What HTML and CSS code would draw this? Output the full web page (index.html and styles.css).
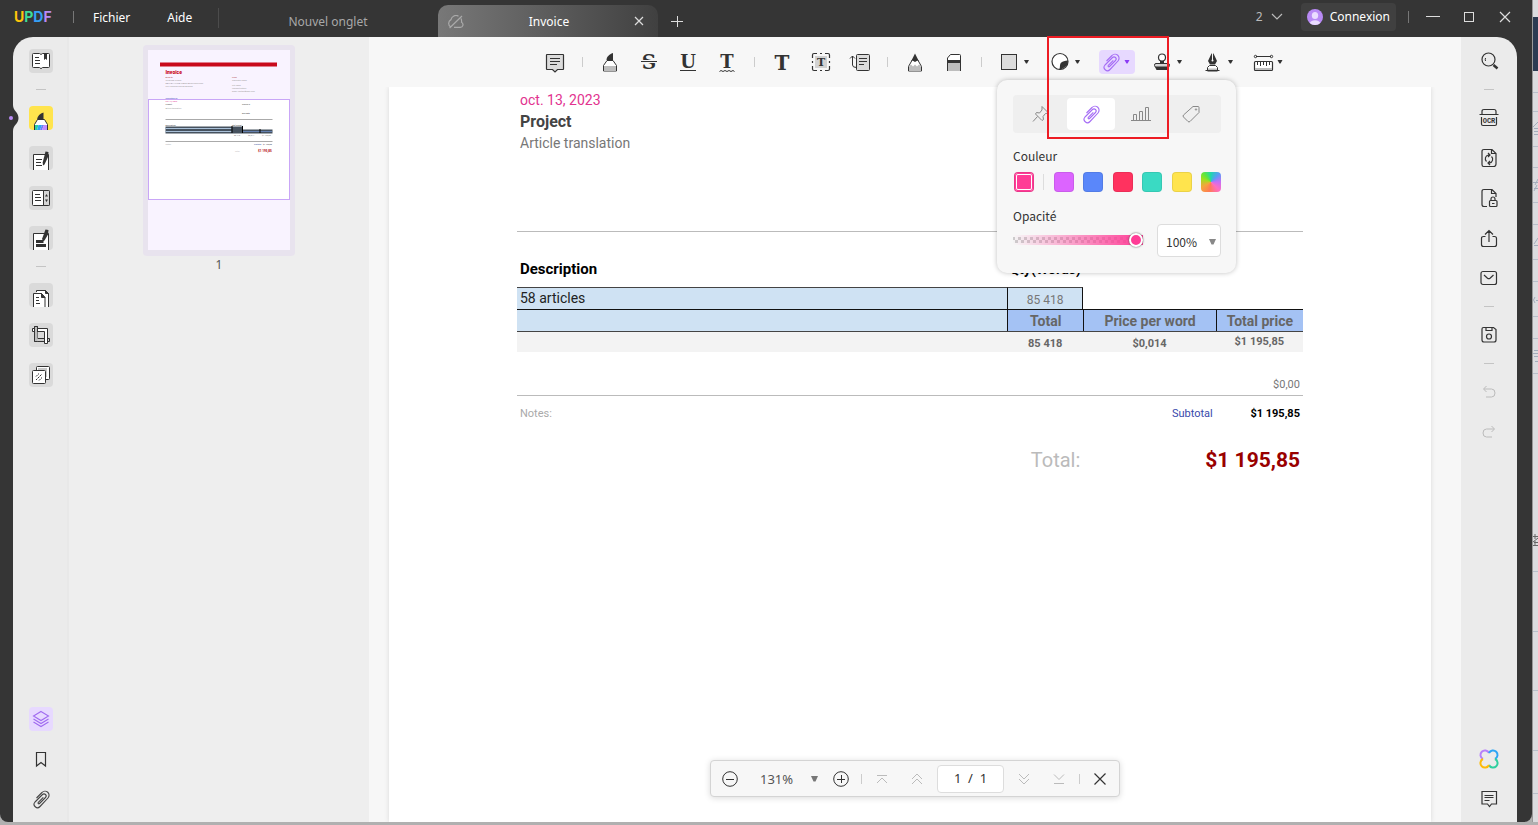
FILE: index.html
```html
<!DOCTYPE html>
<html lang="fr">
<head>
<meta charset="utf-8">
<title>UPDF - Invoice</title>
<link rel="stylesheet" href="styles.css">
</head>
<body>
<div class="desktop">
<div class="window">
  <header class="titlebar">
    <div class="logo"><span class="logo-u">U</span><span class="logo-p">P</span><span class="logo-d">D</span><span class="logo-f">F</span></div>
    <nav class="menu">
      <button type="button">Fichier</button>
      <button type="button">Aide</button>
    </nav>
    <div class="tabs">
      <button type="button" class="tab">Nouvel onglet</button>
      <div class="tab tab-active">
        <svg class="tab-cloud" width="16" height="14" viewBox="0 0 16 14" fill="none" stroke="#aaa" stroke-width="1.2"><path d="M10.5 1.2A5 5 0 0 0 3 4.600 4.200 4.200 0 0 0 2.800 12M1.600 13 14 1M6 12.400h6.200a2.700 2.700 0 0 0 1.300-5.100A6 6 0 0 0 13 3.600"/></svg>
        <span>Invoice</span>
        <button type="button" class="tab-close" aria-label="Fermer l'onglet"><svg width="10" height="10" viewBox="0 0 10 10" stroke="#ddd" stroke-width="1.2"><path d="M1 1l8 8M9 1l-8 8"/></svg></button>
      </div>
      <button type="button" class="tab-new" aria-label="Ajouter un onglet"><svg width="12" height="12" viewBox="0 0 12 12" stroke="#ddd"><path d="M0 6.5h12M6.5 1v11"/></svg></button>
    </div>
    <div class="account">
      <button type="button" class="count">2 <svg width="12" height="8" viewBox="0 0 12 8" fill="none" stroke="#bbb" stroke-width="1.2"><path d="M1 1l5 5 5-5"/></svg></button>
      <button type="button" class="login">
        <svg width="16" height="16" viewBox="0 0 16 16"><defs><clipPath id="av"><circle cx="8" cy="8" r="8"/></clipPath></defs><g clip-path="url(#av)"><rect width="16" height="16" fill="#b98af5"/><ellipse cx="8" cy="6.5" rx="3.2" ry="3.6" fill="#eadcff"/><ellipse cx="8" cy="14.5" rx="5.2" ry="3.2" fill="#eadcff"/></g></svg>
        Connexion
      </button>
      <span class="bar-sep"></span>
      <div class="window-buttons">
        <button type="button" aria-label="Réduire"><svg width="14" height="14" viewBox="0 0 14 14" stroke="#ddd"><path d="M0 6.5h14"/></svg></button>
        <button type="button" aria-label="Agrandir"><svg width="14" height="14" viewBox="0 0 14 14" stroke="#ddd" fill="none"><rect x="2.5" y="2.5" width="9" height="9"/></svg></button>
        <button type="button" aria-label="Fermer"><svg width="14" height="14" viewBox="0 0 14 14" stroke="#ddd" stroke-width="1.2"><path d="M2 2l10 10M12 2 2 12"/></svg></button>
      </div>
    </div>
  </header>

  <div class="workspace">
    <aside class="rail rail-left">
      <button type="button" class="tile" aria-label="Lecture"><svg viewBox="0 0 24 24" fill="none" stroke="#333"><path fill="#fff" d="M4.500 4.500h6l1.500 1 1.500-1h6q1 0 1 1v12q0 1-1 1h-6l-1.500 1.200-1.500-1.200h-6q-1 0-1-1v-12q0-1 1-1z"/><path d="M6 8.500h4M6 11.500h5M6 14.500h5"/><path fill="#333" stroke="none" d="M15 4h3v7l-1.500-1.300L15 11z"/></svg></button>
      <span class="rail-sep"></span>
      <div class="current">
        <svg class="notch" width="6" height="26" viewBox="0 0 6 26"><path fill="#353535" d="M0 0c0 6 5.500 7 5.500 13S0 20 0 26z"/></svg>
        <span class="notch-dot"></span>
        <button type="button" class="tile tile-yellow" aria-label="Commentaire"><svg viewBox="0 0 24 24"><path fill="#fff" stroke="#333" d="M8.500 13.500h7l3 5V25h-13v-6.500z"/><path fill="#2ecf9f" d="M6 19h3.500L8 24H6z"/><path fill="#2da5f5" d="M9.500 19H13l-2 5H8z"/><path fill="#6c7cf5" d="M13 19h2l-2 5h-2z"/><path fill="#c08cff" d="M15 19h3v5h-5z"/><path fill="#333" d="M8 13.500C8.500 10 11 7.500 14.500 6.500V13.500z"/></svg></button>
      </div>
      <button type="button" class="tile" aria-label="Modifier"><svg viewBox="0 0 24 24" fill="none" stroke="#333"><path fill="#fff" d="M4.500 25V8.500h15V25z"/><path d="M7 13.500h6M7 16.500h5M7 19.500h6"/><path fill="#333" stroke="none" d="M16.500 5.500l3 .5-.5 5-3.500 7.500-1.500 1-.3-3z"/></svg></button>
      <button type="button" class="tile" aria-label="Formulaire"><svg viewBox="0 0 24 24" fill="none" stroke="#333"><rect x="3.500" y="4.500" width="17" height="15" rx="1" fill="#fff"/><path fill="#d5d5d5" d="M14.500 4.500h5q1 0 1 1v13q0 1-1 1h-5z"/><path d="M6 8.500h5M6 11.500h6M6 14.500h6"/><path fill="#333" stroke="none" d="M17.500 8l1.500 2.500h-3zM17.500 16l1.500-2.500h-3z"/></svg></button>
      <button type="button" class="tile" aria-label="Biffer"><svg viewBox="0 0 24 24" fill="none" stroke="#333"><path fill="#fff" d="M4.500 25V7.500h15V25z"/><path stroke-width="3" d="M7 15.500h7.500M7 19.500h10"/><path fill="#333" stroke="none" d="M16.500 3.500l3 .5-.5 4.500-3.500 6-2 1-.3-3z"/></svg></button>
      <span class="rail-sep"></span>
      <button type="button" class="tile" aria-label="Organiser les pages"><svg viewBox="0 0 24 24" fill="none" stroke="#333"><path fill="#fff" d="M7.500 9V7.500h9l3 3V25h-4"/><path fill="#333" d="M16.500 7.500l3 3h-3z"/><path fill="#fff" d="M4.500 25V10.500h8l3.500 4V25z"/><path fill="#333" d="M12.500 10.500l3.500 4h-3.500z"/><path d="M7 14.500h3M7 17.500h3M7 20.500h4"/></svg></button>
      <button type="button" class="tile" aria-label="Recadrer"><svg viewBox="0 0 24 24" fill="none" stroke="#333"><path fill="#ccc" d="M5.500 3.500h3v12h12v3h-15z"/><path fill="#fff" d="M3.500 5.500h15v15h-3v-12h-12z"/><path fill="#bbb" d="M8.500 9v-5.500h-3v15h3"/></svg></button>
      <button type="button" class="tile" aria-label="Arrière-plan"><svg viewBox="0 0 24 24" fill="none" stroke="#333"><rect x="7.500" y="3.500" width="13" height="13" rx="1" fill="#fff"/><rect x="9" y="5" width="9" height="9" fill="#c8c8c8" stroke="none"/><rect x="3.500" y="7.500" width="13" height="13" rx="1" fill="#fff"/><path d="M7 13.500l3-3M7 17l6-6M10 17.500l3-3" stroke-dasharray="2 .7"/></svg></button>
      <span class="rail-fill"></span>
      <button type="button" class="tile tile-violet" aria-label="Vignettes"><svg viewBox="0 0 24 24" fill="none" stroke="#a06bf0" stroke-width="1.100"><path d="M12 4.500l7.500 4.500L12 13.500 4.500 9zM4.500 12l7.500 4.500 7.500-4.500M4.500 15l7.500 4.500 7.500-4.500"/></svg></button>
      <button type="button" class="plain" aria-label="Signets"><svg viewBox="0 0 24 24" fill="none" stroke="#333" stroke-width="1.200"><path d="M7.500 5.500h9v13.500L12 15.500 7.500 19z"/></svg></button>
      <button type="button" class="plain" aria-label="Pièces jointes"><svg viewBox="0 0 24 24" fill="none" stroke="#444" stroke-width="1.100"><path d="M7.500 11l5.500-5.500a4 4 0 0 1 6 5.500l-8 8.500a3.300 3.300 0 0 1-5-4.500l7.500-7.500a2 2 0 0 1 3 3l-6 6a.8.8 0 0 1-1.200-1.200l5-5"/></svg></button>
    </aside>

    <aside class="thumbs">
      <div class="thumb">
        <svg class="thumb-page" width="142" height="200" viewBox="0 0 142 200">
          <rect width="142" height="200" fill="#f9f3ff"/>
          <rect x="12" y="12.500" width="117" height="4" fill="#c90a1c"/>
          <rect x="0.500" y="49.500" width="141" height="100" fill="#fff" stroke="#c9a6f7"/>
          <g class="tiny">
            <text x="17.500" y="24" class="tiny-title">Invoice</text>
            <text x="17.500" y="28" fill="#a33">Billed to</text><text x="84" y="28" fill="#a33">From</text>
            <g fill="#999"><text x="17.500" y="31">INVOICED CLIENT</text><text x="17.500" y="34">BAYT AL HIKMA TRANSLATION SERVICES</text><text x="17.500" y="36.500">CITY CENTRE TOWER AVENUE</text>
            <text x="84" y="31">Translator Name</text><text x="84" y="36">City name</text><text x="84" y="39">Payment details</text><text x="84" y="41.500">Email: contact@mail.com</text></g>
            <text x="17.500" y="49" fill="#44b">Submitted on</text>
            <text x="17.500" y="52" fill="#e2328f">oct. 13, 2023</text>
            <text x="17.500" y="55">Project</text><text x="94" y="55">Invoice #</text>
            <text x="17.500" y="58.500" fill="#999">Article translation</text><text x="94" y="64">Due date</text>
            <text x="17.500" y="75.500">Description</text><text x="84" y="75.500">Qty(Words)</text>
            <text x="86" y="85.500" fill="#777">85 418</text><text x="100" y="85.500" fill="#777">$0,014</text><text x="114" y="85.500" fill="#777">$1 195,85</text>
            <text x="17.500" y="95" fill="#aaa">Notes:</text><text x="106" y="95" fill="#334a9c">Subtotal</text><text x="115" y="95">$1 195,85</text>
            <text x="87" y="101.500" fill="#bbb">Total:</text><text x="110" y="102" class="tiny-total">$1 195,85</text>
          </g>
          <path stroke="#aaa" d="M17.500 69.500h107M17.500 91.500h107"/>
          <path fill="#46525f" d="M17.500 76.500h77v3h30v4h-107z"/>
          <path stroke="#a9c0d8" d="M17.500 78.500h66M17.500 81.500h66"/><path stroke="#6480b0" d="M95 81.500h29"/>
          <path stroke="#000" d="M84 76v7M94.500 76v7M112 79v4"/>
        </svg>
      </div>
      <span class="thumb-number">1</span>
    </aside>

    <main class="main">
      <div class="toolbar">
        <button type="button" class="tool" aria-label="Note"><svg viewBox="0 0 24 24" stroke="#333" fill="none"><path fill="#dcdcdc" stroke-width="1.200" d="M4 4.500h16q.5 0 .5.500v14q0 .5-.5.500h-5.500L12 22l-2.500-2.500H4q-.5 0-.5-.5V5q0-.5.500-.5z"/><path d="M7 8.500h10M7 11.500h10M7 14.500h7"/></svg></button>
        <span class="tool-sep"></span>
        <button type="button" class="tool" aria-label="Surligner"><svg viewBox="0 0 24 24"><path fill="#fff" stroke="#333" d="M9 10.500h6l3.500 5V21h-13v-5.500z"/><path fill="#bdbdbd" d="M6 16h12v5H6z"/><path fill="#333" d="M8.500 10c0-3 2.500-5.500 6.500-7v7z"/></svg></button>
        <button type="button" class="tool" aria-label="Barrer"><svg viewBox="0 0 24 24"><text class="slab" x="12" y="19" font-size="20">S</text><path stroke="#f7f7f7" stroke-width="3" d="M4 11.500h16"/><path stroke="#333" d="M4 11.500h16"/></svg></button>
        <button type="button" class="tool" aria-label="Souligner"><svg viewBox="0 0 24 24"><text class="slab" x="12" y="18" font-size="18">U</text><path stroke="#333" d="M4 20.500h16"/></svg></button>
        <button type="button" class="tool" aria-label="Souligner en ondulé"><svg viewBox="0 0 24 24"><text class="slab" x="12" y="18" font-size="18">T</text><path fill="none" stroke="#333" d="M4.500 21.500l1.500-1 2 1 2-1 2 1 2-1 2 1 2-1 1.500 1"/></svg></button>
        <span class="tool-sep"></span>
        <button type="button" class="tool" aria-label="Texte"><svg viewBox="0 0 24 24"><text class="slab" x="12" y="20" font-size="20">T</text></svg></button>
        <button type="button" class="tool" aria-label="Zone de texte"><svg viewBox="0 0 24 24"><rect x="6" y="6" width="12" height="12" fill="#d2d2d2"/><path fill="none" stroke="#333" stroke-width="1.200" d="M3.500 8V5q0-1.500 1.500-1.500h3M16 3.500h3q1.500 0 1.500 1.500v3M20.500 16v3q0 1.500-1.500 1.500h-3M8 20.500H5q-1.500 0-1.500-1.500v-3M11 3.500h2M11 20.500h2M3.500 11v2M20.500 11v2"/><text class="slab" x="12" y="16" font-size="11">T</text></svg></button>
        <button type="button" class="tool" aria-label="Légende"><svg viewBox="0 0 24 24" fill="none" stroke="#333"><rect x="8.500" y="4.500" width="13" height="16" rx="1" fill="#dcdcdc"/><path d="M11 8.500h8M11 11.500h8M11 14.500h5M4.500 6v9q0 2.500 4 2.500M2 8.500L4.500 6 7 8.500"/></svg></button>
        <span class="tool-sep"></span>
        <button type="button" class="tool" aria-label="Crayon"><svg viewBox="0 0 24 24"><path fill="#fff" stroke="#333" d="M9.500 9.500h5l4 7V21h-13v-4.500z"/><path fill="#bdbdbd" d="M6 16.500l2-2 2 2 2-2 2 2 2-2 2 2V21H6z"/><path fill="#333" d="M12 3.500l4 8-1.500-1L12 12l-2.500-1.500L8 11.500z"/></svg></button>
        <button type="button" class="tool" aria-label="Gomme"><svg viewBox="0 0 24 24"><path fill="#fff" stroke="#333" d="M5.500 21V8l3-3.500h9q1 0 1 1V21"/><path fill="#333" d="M5 10h14v3H5z"/><path fill="#bdbdbd" d="M6 13h12v8H6z"/></svg></button>
        <span class="tool-sep"></span>
        <button type="button" class="tool tool-drop" aria-label="Formes"><svg viewBox="0 0 36 24"><rect x="4.500" y="4.500" width="15" height="15" fill="#dcdcdc" stroke="#333"/><path fill="#333" d="M27 10h5l-2 3.500h-1z"/></svg></button>
        <button type="button" class="tool tool-drop" aria-label="Autocollants"><svg viewBox="0 0 36 24"><circle cx="12" cy="11.500" r="8" fill="#fff" stroke="#333" stroke-width="1.200"/><path fill="#333" d="M20 10.500q.5 3-2.500 6T11 19.500q1-1 1-4t3-4 5-1z"/><path fill="#333" d="M27 10h5l-2 3.500h-1z"/></svg></button>
        <div class="attach">
          <button type="button" class="tool tool-drop tool-on" aria-label="Pièce jointe"><svg viewBox="0 0 36 24" fill="none" stroke="#a56cf5" stroke-width="1.100"><path d="M7.500 11l5.500-5.500a4 4 0 0 1 6 5.500l-8 8.500a3.300 3.300 0 0 1-5-4.500l7.500-7.500a2 2 0 0 1 3 3l-6 6a.8.8 0 0 1-1.200-1.200l5-5"/><path fill="#8c3cf5" stroke="none" d="M25.500 10h5l-2 3.500h-1z"/></svg></button>
          <section class="popover">
            <div class="kinds">
              <button type="button" aria-label="Punaise"><svg viewBox="0 0 24 24" fill="none" stroke="#888"><path d="M13 4.500l6.500 6.500-3 .5-2.500 3 .5 3-1.500 1-6.500-6.500 1-1.500 3 .5 2.500-3zM8.500 14.500L4 19.500"/></svg></button>
              <button type="button" class="kind-on" aria-label="Trombone"><svg viewBox="0 0 24 24" fill="none" stroke="#a56cf5" stroke-width="1.100"><path d="M7.500 11l5.500-5.500a4 4 0 0 1 6 5.500l-8 8.500a3.300 3.300 0 0 1-5-4.500l7.500-7.500a2 2 0 0 1 3 3l-6 6a.8.8 0 0 1-1.200-1.200l5-5"/></svg></button>
              <button type="button" aria-label="Graphique"><svg viewBox="0 0 24 24" fill="none" stroke="#888"><path d="M2 18.500h20M4.500 18v-5.500h3V18M10.500 18V9.500h3V18M16.500 18V5.500h3V18"/></svg></button>
              <button type="button" aria-label="Étiquette"><svg viewBox="0 0 24 24" fill="none" stroke="#888"><path d="M14 4.500h5q1 0 1 1v5L11 19.500q-1 1-2 0l-4.500-4.500q-1-1 0-2z"/><circle cx="17" cy="7.500" r=".7"/></svg></button>
            </div>
            <h2>Couleur</h2>
            <div class="swatches">
              <button type="button" class="swatch pink" aria-label="Rose"></button>
              <span class="swatch-sep"></span>
              <button type="button" class="swatch purple" aria-label="Violet"></button>
              <button type="button" class="swatch blue" aria-label="Bleu"></button>
              <button type="button" class="swatch red" aria-label="Rouge"></button>
              <button type="button" class="swatch teal" aria-label="Turquoise"></button>
              <button type="button" class="swatch yellow" aria-label="Jaune"></button>
              <button type="button" class="swatch rainbow" aria-label="Autre couleur"></button>
            </div>
            <div class="opacity">
              <div class="opacity-range">
                <label for="opacity">Opacité</label>
                <input type="range" id="opacity" min="0" max="100" value="100">
              </div>
              <div class="opacity-select">
                <select aria-label="Valeur d'opacité"><option>100%</option></select>
                <svg width="7" height="6" viewBox="0 0 7 6"><path fill="#888" d="M0 0h7L4.500 5.500h-2z"/></svg>
              </div>
            </div>
          </section>
          <span class="callout"></span>
        </div>
        <button type="button" class="tool tool-drop" aria-label="Tampon"><svg viewBox="0 0 36 24"><circle cx="12" cy="7.500" r="3.500" fill="#fff" stroke="#333" stroke-width="1.200"/><path fill="#333" d="M10 11h4v3h-4z"/><rect x="4.500" y="13.500" width="15" height="3.500" rx="1.500" fill="#d5d5d5" stroke="#333"/><path fill="#333" d="M5 17h14v3H6.500z"/><path fill="#333" d="M27 10h5l-2 3.500h-1z"/></svg></button>
        <button type="button" class="tool tool-drop" aria-label="Signature"><svg viewBox="0 0 36 24"><path fill="#fff" stroke="#333" d="M8.500 15.500h6l2 2V21h-10v-3.500z"/><path fill="#bdbdbd" d="M7 18.500h9V21H7z"/><path fill="#333" d="M10.500 3.500l.5 0v6.500h1V3.500h.5l3.500 7.500-2 3.500H9L7 11z"/><circle cx="11.500" cy="10.500" r="1" fill="#fff"/><path stroke="#333" d="M4.500 20.500h14"/><path fill="#333" d="M27 10h5l-2 3.500h-1z"/></svg></button>
        <button type="button" class="tool tool-drop" aria-label="Mesure"><svg viewBox="0 0 36 24" fill="none" stroke="#333"><path d="M4 6.500h15"/><circle cx="3.500" cy="6.500" r="1.200"/><circle cx="19.500" cy="6.500" r="1.200"/><rect x="2.500" y="11.500" width="18" height="9" rx="1" fill="#fff" stroke-width="1.200"/><path fill="#bdbdbd" stroke="none" d="M3 18h17v2H3z"/><path d="M5.500 12v3M8.500 12v4M11.500 12v3M14.500 12v4M17.500 12v3"/><path fill="#333" stroke="none" d="M25.500 10h5l-2 3.500h-1z"/></svg></button>
      </div>

      <div class="canvas">
        <article class="page">
          <p class="date">oct. 13, 2023</p>
          <h1>Project</h1>
          <p class="project">Article translation</p>
          <hr>
          <table>
            <colgroup><col class="c-desc"><col class="c-qty"><col class="c-price"><col class="c-total"></colgroup>
            <thead><tr><th>Description</th><th>Qty(Words)</th><td></td><td></td></tr></thead>
            <tbody>
              <tr class="item"><td>58 articles</td><td class="num">85 418</td><td></td><td></td></tr>
              <tr class="heads"><td></td><th>Total</th><th>Price per word</th><th>Total price</th></tr>
              <tr class="values"><td></td><td>85 418</td><td>$0,014</td><td class="high">$1 195,85</td></tr>
              <tr class="zero"><td></td><td></td><td></td><td>$0,00</td></tr>
            </tbody>
            <tfoot>
              <tr class="subtotal"><td>Notes:</td><td></td><td>Subtotal</td><td>$1 195,85</td></tr>
              <tr class="total"><td></td><td>Total:</td><td colspan="2">$1 195,85</td></tr>
            </tfoot>
          </table>
        </article>
      </div>

      <div class="pager">
        <button type="button" aria-label="Zoom arrière"><svg width="16" height="16" viewBox="0 0 16 16" fill="none" stroke="#333"><circle cx="8" cy="8" r="7.300"/><path d="M4 8.500h8"/></svg></button>
        <button type="button" class="zoom">131% <svg width="7" height="6" viewBox="0 0 7 6"><path fill="#777" d="M0 0h7L4.500 5.500h-2z"/></svg></button>
        <button type="button" aria-label="Zoom avant"><svg width="16" height="16" viewBox="0 0 16 16" fill="none" stroke="#333"><circle cx="8" cy="8" r="7.300"/><path d="M4 8.500h8M8.500 4v8"/></svg></button>
        <span class="tool-sep"></span>
        <div class="nav">
          <button type="button" aria-label="Première page"><svg width="12" height="12" viewBox="0 0 12 12" fill="none" stroke="#bbb"><path d="M1 2.500h10M1 10l5-5 5 5"/></svg></button>
          <button type="button" aria-label="Page précédente"><svg width="12" height="12" viewBox="0 0 12 12" fill="none" stroke="#bbb"><path d="M1 6l5-5 5 5M1 11l5-5 5 5"/></svg></button>
        </div>
        <input type="text" aria-label="Page" value="1&nbsp; /&nbsp; 1">
        <div class="nav">
          <button type="button" aria-label="Page suivante"><svg width="12" height="12" viewBox="0 0 12 12" fill="none" stroke="#bbb"><path d="M1 1l5 5 5-5M1 6l5 5 5-5"/></svg></button>
          <button type="button" aria-label="Dernière page"><svg width="12" height="12" viewBox="0 0 12 12" fill="none" stroke="#bbb"><path d="M1 1.500l5 5 5-5M1 10.500h10"/></svg></button>
        </div>
        <span class="tool-sep"></span>
        <button type="button" aria-label="Fermer"><svg width="16" height="12" viewBox="0 0 16 12" stroke="#333" stroke-width="1.200"><path d="M2.500.5l11 11M13.500.5l-11 11"/></svg></button>
      </div>
    </main>

    <aside class="rail rail-right">
      <button type="button" class="plain" aria-label="Rechercher"><svg viewBox="0 0 24 24" fill="none" stroke="#333"><circle cx="11.500" cy="10.500" r="6.500" stroke-width="1.200"/><path d="M8.500 9q-.5 1.500 0 3"/><path stroke-width="2.500" d="M16.500 16l4 3.500"/></svg></button>
      <span class="rail-sep"></span>
      <button type="button" class="plain" aria-label="OCR"><svg viewBox="0 0 24 24" fill="none" stroke="#333" stroke-width="1.200"><path d="M5 8V5.500q0-2 2-2h10q2 0 2 2V8M2.500 8.500h19M4.500 11v7q0 1.500 1.500 1.500h12q1.500 0 1.500-1.500v-7"/><text x="12" y="17" class="ocr">OCR</text></svg></button>
      <button type="button" class="plain" aria-label="Convertir"><svg viewBox="0 0 24 24" fill="none" stroke="#333" stroke-width="1.200"><path d="M7 3.500h8l4 4V18q0 2.500-2.500 2.500h-10Q5 20.500 5 18.500v-13q0-2 2-2zM14.500 3.500v4H19"/><path d="M9.500 15.500a3.800 3.800 0 0 1 2-6.500h1M11 7l2 2-2 2M14.500 10.500a3.800 3.800 0 0 1-2 6.500h-1M13 15l-2 2 2 2"/></svg></button>
      <button type="button" class="plain" aria-label="Protéger"><svg viewBox="0 0 24 24" fill="none" stroke="#333" stroke-width="1.200"><path d="M10 20.500H7q-2 0-2-2v-13q0-2 2-2h8l4 4V11M14.500 3.500v4H19"/><rect x="12.500" y="14.500" width="7.500" height="6" rx="1"/><path d="M14 14v-1q0-2 2-2t2 2v1M15 17.500h2.500"/></svg></button>
      <button type="button" class="plain" aria-label="Partager"><svg viewBox="0 0 24 24" fill="none" stroke="#333" stroke-width="1.200"><path d="M8.500 10.500h-2q-2 0-2 2v6q0 2 2 2h11q2 0 2-2v-6q0-2-2-2h-2M12 16V5M8 8.500l4-4 4 4"/></svg></button>
      <button type="button" class="plain" aria-label="Envoyer par e-mail"><svg viewBox="0 0 24 24" fill="none" stroke="#333" stroke-width="1.200"><rect x="4" y="5.500" width="15.500" height="13" rx="2"/><path d="M7 9l3.500 3.200q1.300 1 2.500 0L16.500 9"/></svg></button>
      <span class="rail-sep"></span>
      <button type="button" class="plain" aria-label="Enregistrer"><svg viewBox="0 0 24 24" fill="none" stroke="#333" stroke-width="1.200"><path d="M6.500 4.500h10l2.500 2V17q0 2-2 2H7q-2 0-2-2V6q0-1.500 1.500-1.500zM9 4.500v3h6v-3"/><circle cx="12" cy="13.500" r="2.500"/></svg></button>
      <span class="rail-sep"></span>
      <button type="button" class="plain" aria-label="Annuler"><svg viewBox="0 0 24 24" fill="none" stroke="#bbb"><path d="M9.500 6L6.500 9l3 3M7 9h7.500q3.500 0 3.500 4t-3.500 4H9"/></svg></button>
      <button type="button" class="plain" aria-label="Rétablir"><svg viewBox="0 0 24 24" fill="none" stroke="#bbb"><path d="M14.500 6l3 3-3 3M17 9H9.500Q6 9 6 13t3.500 4H15"/></svg></button>
      <span class="rail-fill"></span>
      <button type="button" class="plain" aria-label="UPDF AI"><svg viewBox="0 0 24 24" fill="none" stroke-width="2"><path stroke="#b780fa" d="M6 12A4.500 4.500 0 1 1 12 6"/><path stroke="#2da5f5" d="M12 6A4.500 4.500 0 1 1 18 12"/><path stroke="#2fcf9f" d="M18 12A4.500 4.500 0 1 1 12 18"/><path stroke="#fdbb08" d="M12 18A4.500 4.500 0 1 1 6 12"/></svg></button>
      <button type="button" class="plain" aria-label="Commentaires"><svg viewBox="0 0 24 24" fill="none" stroke="#333"><path stroke-width="1.200" d="M5 4.500h14.500v12.500h-5l-2 2.500-2-2.500H5z"/><path d="M7.500 8.500h9M7.500 10.500h9M7.500 13.500h5"/></svg></button>
    </aside>
  </div>
</div>
<svg class="behind" width="6" height="822" viewBox="0 0 6 822">
  <rect width="6" height="822" fill="#dcdcdf"/><rect y="17" width="6" height="54" fill="#2c3b52"/>
  <path stroke="#b9bfca" d="M0 92.500h6M0 111.500h6M0 146.500h6M0 167.500h6M0 202.500h6M0 224.500h6M0 259.500h6M0 281.500h6M0 316.500h6M0 338.500h6M0 373.500h6M0 571.500h6M0 631.500h6M0 690.500h6M0 750.500h6M0 793.500h6"/>
  <path stroke="#a4acbb" fill="none" d="M6 122l-5 5M2 128.500h4M2 131.500h4M2 134.500h4M1 182.500h5M6 179l-3 6M2 188.500h4M5 185l-3 6M6 238l-4 6M2 245.500h4M3 297q-3 3 0 6M4 300.500h2M2 350.500h4M1 353.500h5M2 356.500h4M3 361.500h3"/>
  <path stroke="#666" fill="none" d="M1 536.500h5M3 534v5M6 538l-5 4M2 542.500h4M3 541v5M1 545.500h5"/>
  <path stroke="#999" d="M.5 0v822"/>
</svg>
</div>
</body>
</html>
```
FILE: styles.css
```css
* { box-sizing: border-box; }
html, body { height: 100%; }
body { margin: 0; overflow: hidden; background: #b0b0b0; color: #333; font: 12px/16px "Noto Sans", "Noto Sans CJK SC", sans-serif; }
button { padding: 0; border: 0; background: none; color: inherit; font: inherit; }
svg { display: block; flex: none; }
h1, h2, p { margin: 0; }

.desktop { display: flex; height: 100vh; padding-bottom: 3px; }
.behind { overflow: hidden; }
.window { display: flex; flex: 1; flex-direction: column; min-width: 0; border-radius: 0 0 8px 8px; background: #353535; }

/* Title bar */
.titlebar { display: flex; flex: none; height: 37px; padding: 0 20px 0 14px; color: #fff; }
.logo { width: 60px; height: 12px; margin-top: 11px; border-right: 1px solid #777; font: 700 14px/12px Inter, sans-serif; }
.logo-u { color: #ffc60b; }
.logo-p { color: #3ddc97; }
.logo-d { color: #35a0f5; }
.logo-f { color: #b98af5; }
.menu { display: flex; gap: 37px; width: 145px; height: 20px; margin-top: 8px; padding-left: 19px; border-right: 1px solid #4c4c4c; }
.tabs { display: flex; flex: 1; align-items: flex-end; margin-left: -1px; }
.tab { width: 220px; height: 32px; padding-top: 2px; color: #a8a8a8; }
.tab-active { display: flex; align-items: center; justify-content: space-between; padding: 2px 14px 0 10px; border-radius: 10px 10px 0 0; background: linear-gradient(90deg, #787878, #404040); color: #fff; }
.tab-close { padding: 0 0 2px; }
.tab-new { height: 32px; margin-left: 13px; }
.account { display: flex; align-items: center; height: 34px; }
.count { display: flex; gap: 8px; align-items: center; margin-right: 18px; color: #bbb; }
.login { display: flex; gap: 7px; align-items: center; height: 28px; padding: 0 6px; border-radius: 4px; background: #404040; }
.bar-sep { width: 1px; height: 12px; margin: 0 17px 0 12px; background: #777; }
.window-buttons { display: flex; gap: 22px; }

/* Side rails */
.workspace { display: flex; flex: 1; min-height: 0; margin: 0 15px 0 13px; }
.rail { display: flex; flex: none; flex-direction: column; gap: 16px; align-items: center; width: 56px; padding: 12px 0 11px; background: #ebebeb; }
.rail-left { border-radius: 20px 0 0 0; box-shadow: inset -2px 0 #e8e8e8; }
.rail-right { border-radius: 0 20px 0 0; }
.rail-sep { width: 10px; height: 1px; background: #c4c4c4; }
.rail-fill { flex: 1; margin-top: -16px; }
.tile, .plain { flex: none; width: 24px; height: 24px; border-radius: 4px; }
.tile { overflow: hidden; background: #dadada; }
.tile-yellow { background: #ffe44d; }
.tile-violet { background: #e7d9ff; }
.current { position: relative; display: flex; justify-content: center; width: 100%; }
.notch { position: absolute; top: -1px; left: 0; }
.notch-dot { position: absolute; top: 10px; left: -4px; width: 4px; height: 4px; border-radius: 2px; background: #b98af5; }
.ocr { font: 700 7px "Liberation Mono", monospace; fill: #333; stroke: none; text-anchor: middle; }

/* Thumbnails */
.thumbs { display: flex; flex: none; flex-direction: column; align-items: center; width: 300px; padding-top: 8px; background: #eee; }
.thumb { padding: 5px 5px 6px; border-radius: 4px; background: #e8e3ee; }
.thumb-number { margin-top: 1px; color: #555; }
.tiny { font: 2px Roboto, sans-serif; fill: #333; }
.tiny-title { font-size: 5px; font-weight: 900; fill: #c90a1c; }
.tiny-total { font-size: 3px; font-weight: 900; fill: #b81c1c; }

/* Toolbar */
.main { position: relative; display: flex; flex: 1; flex-direction: column; min-width: 0; background: #f7f7f7; }
.toolbar { position: relative; z-index: 1; display: flex; flex: none; gap: 15px; align-items: center; justify-content: center; height: 50px; padding-left: 1px; }
.tool { width: 24px; height: 24px; }
.tool-drop { width: 36px; }
.tool-on { border-radius: 4px; background: #e7d9ff; }
.tool-sep { width: 1px; height: 10px; background: #ccc; }
.slab { font-family: "DejaVu Serif", serif; font-weight: 700; fill: #333; text-anchor: middle; }
.attach { position: relative; height: 24px; }
.popover { position: absolute; top: 30px; left: -102px; width: 239px; padding: 15px 15px 16px 16px; border-radius: 10px; background: #f7f7f7; box-shadow: 0 0 5px rgba(0, 0, 0, .25); font-family: "Noto Sans CJK SC", sans-serif; font-size: 12px; }
.callout { position: absolute; top: -14px; left: -52px; width: 122px; height: 103px; border: 2px solid #ed1c24; pointer-events: none; }

/* Attachment options */
.kinds { display: flex; gap: 2px; height: 38px; padding: 3px 6px 3px 4px; border-radius: 4px; background: #efefef; }
.kinds button { display: flex; flex: 1; align-items: center; justify-content: center; border-radius: 4px; }
.kinds svg { width: 24px; height: 24px; }
.kinds .kind-on { background: #fff; }
.popover h2 { margin-top: 15px; font-size: 12px; font-weight: 400; }
.swatches { display: flex; justify-content: space-between; margin: 8px 0 0 1px; }
.swatch { width: 20px; height: 20px; border: 1px solid rgba(0, 0, 0, .08); border-radius: 4px; }
.swatch-sep { width: 1px; height: 16px; margin-top: 2px; background: #ddd; }
.pink { background: #ff3c96; box-shadow: inset 0 0 0 1px #ff3c96, inset 0 0 0 2px #fff; }
.purple { background: #dc64ff; }
.blue { background: #5a87fa; }
.red { background: #ff325f; }
.teal { background: #3adac3; }
.yellow { background: #ffe44d; }
.rainbow { border: 0; background: conic-gradient(#1fd6b0, #5a9cf5 45deg, #c86ef5 90deg, #ff6ec0 135deg, #ff7a55 190deg, #f5a43c 240deg, #9fe01e 290deg, #5fe63c 320deg, #1fd6b0); }
.opacity { display: flex; gap: 14px; align-items: flex-end; justify-content: space-between; margin-top: 16px; }
.opacity-range { flex: 1; }
.opacity-range label { display: block; }
.opacity-range input { display: block; width: 100%; height: 14px; margin: 9px 0 10px; appearance: none; background: linear-gradient(90deg, rgba(255, 60, 150, 0), #ff3c96) center / 100% 10px no-repeat, repeating-conic-gradient(#ccc 0 25%, #f4f4f4 0 50%) center / 6px 6px repeat-x; background-clip: content-box; padding: 2px 0; }
.opacity-range input::-webkit-slider-thumb { width: 14px; height: 14px; border: 2px solid #fff; border-radius: 50%; appearance: none; background: #ff3c96; box-shadow: 0 0 2px #444; }
.opacity-select { position: relative; }
.opacity-select select { width: 64px; height: 33px; padding: 2px 8px 0; border: 1px solid #ddd; border-radius: 4px; appearance: none; background: #fff; color: #333; font: inherit; }
.opacity-select svg { position: absolute; top: 15px; right: 5px; }

/* Document */
.canvas { display: flex; flex: 1; min-height: 0; padding: 0 30px 0 20px; overflow: hidden; }
.page { flex: 1; padding: 3px 128px 0; background: #fff; box-shadow: 0 0 5px rgba(0, 0, 0, .12); font: 14px/21px Roboto, sans-serif; }
.page h1, .page p { padding-left: 3px; font-size: 14px; line-height: 21px; }
.page h1 { color: #444; font-size: 16px; }
.page .date { color: #e2328f; }
.page .project { color: #777; line-height: 23px; }
.page hr { height: 1px; margin: 76px 0 0; border: 0; background: #bbb; }
table { width: 100%; border-spacing: 0; table-layout: fixed; }
.c-desc { width: 62.35%; }
.c-qty { width: 9.7%; }
.c-price { width: 16.85%; }
.c-total { width: 11.1%; }
td, th { padding: 0 3px; line-height: 20px; }
thead th { height: 55px; padding-bottom: 8px; color: #000; font-size: 15px; vertical-align: bottom; white-space: nowrap; }
thead th:first-child { text-align: left; }
thead th:nth-child(2) { padding: 0 0 8px; font-size: 14px; }
.item td { height: 22px; padding-bottom: 1px; color: #222; }
.item td:nth-child(-n+2) { border-top: 1px solid #444; background: #cfe2f3; }
.item td:nth-child(2) { border-right: 1px solid #111; border-left: 1px solid #111; }
.item .num { padding: 4px 3px 0; color: #777; font-size: 12px; line-height: 17px; text-align: center; }
.heads td, .heads th { height: 22px; border-top: 1px solid #111; background: #a4c2f4; color: #666; white-space: nowrap; }
.heads td { background: #cfe2f3; }
.heads th { border-left: 1px solid #111; }
.values td { height: 21px; padding: 4px 3px 0; border-top: 1px solid #444; background: #f3f3f3; color: #666; font-size: 11px; font-weight: 700; line-height: 16px; text-align: center; vertical-align: top; }
.values .high { padding: 2px 3px 0; }
.zero td { height: 44px; border-bottom: 1px solid #bbb; color: #777; font-size: 11px; text-align: right; vertical-align: bottom; }
.subtotal td { height: 35px; color: #aaa; font-size: 11px; }
.subtotal td:nth-child(3) { color: #3949ab; text-align: right; }
.subtotal td:last-child { color: #000; font-weight: 700; text-align: right; }
.total td { height: 57px; color: #bbb; font-size: 20px; text-align: right; }
.total td:last-child { color: #900; font-size: 21px; font-weight: 700; }

/* Page navigation */
.pager { position: absolute; bottom: 25px; left: 50%; display: flex; gap: 12px; align-items: center; width: 410px; height: 37px; padding: 0 11px; transform: translateX(-50%); border: 1px solid #d4d4d4; border-radius: 4px; background: #f7f7f7; box-shadow: 0 1px 6px rgba(0, 0, 0, .15); font-size: 13px; }
.zoom { display: flex; align-items: center; justify-content: space-between; width: 58px; margin: 0 3px 0 10px; color: #555; }
.nav { display: flex; gap: 23px; margin: 0 2px; }
.pager input { width: 67px; height: 28px; padding: 0 0 2px; border: 1px solid #ddd; border-radius: 4px; background: #fff; color: #333; font: inherit; text-align: center; }
```
